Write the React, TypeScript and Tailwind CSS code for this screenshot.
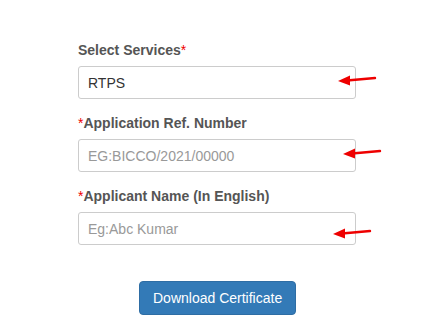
import React from "react";

function Arrow({ className }: { className: string }) {
  return (
    <svg
      className={"absolute pointer-events-none " + className}
      width="40"
      height="12"
      viewBox="0 0 40 12"
    >
      <line x1="10" y1="6.5" x2="38" y2="4" stroke="#ee0000" strokeWidth="2.4" strokeLinecap="round" />
      <polygon points="1,7 13,1.5 13,11.5" fill="#ee0000" />
    </svg>
  );
}

function Field({
  label,
  required,
  leadingStar,
  placeholder,
  value,
  arrowClass,
}: {
  label: string;
  required?: boolean;
  leadingStar?: boolean;
  placeholder?: string;
  value?: string;
  arrowClass: string;
}) {
  return (
    <div className="relative mb-[14px]">
      <label className="block text-[14px] leading-[20px] font-bold text-[#555] mb-[6px]">
        {leadingStar && <span className="text-[#e00] font-normal">*</span>}
        {label}
        {required && <span className="text-[#e00] font-normal">*</span>}
      </label>
      <input
        className="block w-[278px] h-[33px] px-[9px] border border-[#ccc] rounded-[3px] text-[14px] text-[#333] placeholder:text-[#999] outline-none bg-white"
        placeholder={placeholder}
        defaultValue={value}
      />
      <Arrow className={arrowClass} />
    </div>
  );
}

export default function App() {
  return (
    <div className="w-[442px] h-[331px] bg-white overflow-hidden" style={{ fontFamily: '"Liberation Sans", Arial, sans-serif' }}>
      <div className="pl-[78px] pt-[40px]">
        <Field label="Select Services" required value="RTPS" arrowClass="left-[259px] top-[34px]" />
        <Field label="Application Ref. Number" leadingStar placeholder="EG:BICCO/2021/00000" arrowClass="left-[264px] top-[34px]" />
        <Field label="Applicant Name (In English)" leadingStar placeholder="Eg:Abc Kumar" arrowClass="left-[254px] top-[41px]" />
        <div className="pt-[22px] pl-[61px]">
          <button className="h-[34px] px-[13px] bg-[#337ab7] text-white text-[14px] rounded-[4px] border border-[#2e6da4]">
            Download Certificate
          </button>
        </div>
      </div>
    </div>
  );
}
